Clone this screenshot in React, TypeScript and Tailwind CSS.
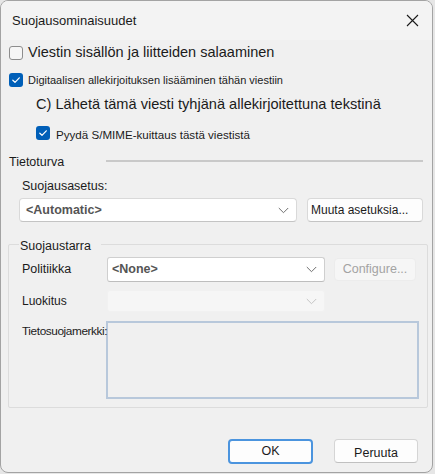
import React from "react";

const font = "font-['Liberation_Sans',Arial,sans-serif]";

function Check({ checked }: { checked?: boolean }) {
  if (checked) {
    return (
      <span className="flex h-[14px] w-[14px] shrink-0 items-center justify-center rounded-[3px] bg-[#005fb8]">
        <svg width="10" height="10" viewBox="0 0 10 10">
          <path d="M1.8 5.2 L4 7.3 L8.3 2.8" fill="none" stroke="#fff" strokeWidth="1.2" strokeLinecap="round" strokeLinejoin="round" />
        </svg>
      </span>
    );
  }
  return <span className="h-[14px] w-[14px] shrink-0 rounded-[3px] border border-[#8d8d8d] bg-[#f6f6f6]" />;
}

function Chevron({ color = "#6e6e6e" }: { color?: string }) {
  return (
    <svg width="11" height="7" viewBox="0 0 11 7">
      <path d="M0.8 1 L5.5 5.7 L10.2 1" fill="none" stroke={color} strokeWidth="1" />
    </svg>
  );
}

export default function App() {
  return (
    <div className={`h-[474px] w-[435px] bg-[#e6e6e6] ${font} text-[#1b1b1b]`}>
      <div className="flex h-[473px] w-[433px] flex-col overflow-hidden rounded-[8px] border border-[#a3a3a3] bg-[#f0f0f0]">
        {/* title bar */}
        <div className="flex h-[39px] shrink-0 items-center justify-between pl-[11px] pr-[13px] bg-[#f3f3f3]">
          <span className="text-[13px] text-[#1a1a1a]">Suojausominaisuudet</span>
          <svg width="13" height="13" viewBox="0 0 13 13">
            <path d="M1 1 L12 12 M12 1 L1 12" stroke="#1a1a1a" strokeWidth="1.1" />
          </svg>
        </div>

        <div className="flex flex-col pl-[8px]">
          <div className="flex h-[26px] items-center gap-[5px]">
            <Check />
            <span className="text-[14.5px]">Viestin sisällön ja liitteiden salaaminen</span>
          </div>
          <div className="flex h-[28px] items-center gap-[5px]">
            <Check checked />
            <span className="text-[11px]">Digitaalisen allekirjoituksen lisääminen tähän viestiin</span>
          </div>
          <div className="flex h-[22px] items-center pl-[27px]">
            <span className="text-[14.6px]">C) Lähetä tämä viesti tyhjänä allekirjoitettuna tekstinä</span>
          </div>
          <div className="flex h-[34px] items-center gap-[6px] pl-[27px]">
            <Check checked />
            <span className="mt-[3px] text-[11.6px]">Pyydä S/MIME-kuittaus tästä viestistä</span>
          </div>

          <div className="flex h-[24px] items-center">
            <span className="w-[97px] text-[12.5px]">Tietoturva</span>
            <div className="mb-[2px] h-[2px] w-[317px] bg-[#c9c9c9]" />
          </div>
          <div className="flex h-[24px] items-center pl-[13px]">
            <span className="text-[12.5px]">Suojausasetus:</span>
          </div>
          <div className="flex h-[24px] items-center gap-[10px] pl-[10px]">
            <div className="flex h-[24px] w-[278px] items-center justify-between rounded-[4px] border border-[#d9d9d9] border-b-[#c4c4c4] bg-white pl-[6px] pr-[7px]">
              <span className="text-[12.5px] font-bold text-[#555]">&lt;Automatic&gt;</span>
              <Chevron />
            </div>
            <div className="flex h-[24px] w-[116px] items-center rounded-[4px] border border-[#d9d9d9] border-b-[#c4c4c4] bg-[#fdfdfd] pl-[3px]">
              <span className="text-[12px]">Muuta asetuksia...</span>
            </div>
          </div>

          {/* Suojaustarra group */}
          <div className="relative mt-[22px] flex h-[164px] w-[420px] -ml-[1px] flex-col rounded-[2px] border border-[#dcdcdc] pl-[13px]">
            <span className="absolute -top-[7px] left-[10px] w-[82px] bg-[#f0f0f0] pl-[1px] text-[12.5px] leading-[16px]">Suojaustarra</span>

            <div className="mt-[12px] flex h-[25px] items-center">
              <span className="w-[85px] text-[12.5px]">Politiikka</span>
              <div className="flex h-[25px] w-[218px] items-center justify-between rounded-[3px] border border-[#cfcfcf] border-b-[#bdbdbd] bg-white pl-[4px] pr-[7px]">
                <span className="text-[12.5px] font-bold text-[#555]">&lt;None&gt;</span>
                <Chevron />
              </div>
              <div className="ml-[9px] flex h-[23px] w-[82px] items-center justify-center rounded-[4px] border border-[#ececec] bg-[#f6f6f6]">
                <span className="text-[12.5px] text-[#a3a3a3]">Configure...</span>
              </div>
            </div>

            <div className="mt-[8px] flex h-[22px] items-center">
              <span className="w-[85px] text-[12px]">Luokitus</span>
              <div className="flex h-[22px] w-[218px] items-center justify-end rounded-[3px] border border-[#f1f1f1] bg-[#f6f6f6] pr-[7px]">
                <Chevron color="#c4c4c4" />
              </div>
            </div>

            <div className="mt-[9px] flex">
              <span className="relative z-10 mt-[2px] w-[84px] shrink-0 whitespace-nowrap text-[11.8px] tracking-[-0.4px]">Tietosuojamerkki:</span>
              <div className="h-[78px] w-[313px] border-2 border-[#b8c8db] bg-[#f0f0f0]" />
            </div>
          </div>

          <div className="mt-[31px] flex gap-[21px] pl-[219px]">
            <div className="flex h-[25px] w-[85px] items-center justify-center rounded-[4px] border-2 border-[#4b94de] bg-[#fdfdfd]">
              <span className="text-[12.5px]">OK</span>
            </div>
            <div className="flex h-[24px] w-[84px] items-center justify-center rounded-[4px] border border-[#d5d5d5] border-b-[#c0c0c0] bg-[#fdfdfd]">
              <span className="mt-[5px] text-[12.5px]">Peruuta</span>
            </div>
          </div>
        </div>
      </div>
    </div>
  );
}
